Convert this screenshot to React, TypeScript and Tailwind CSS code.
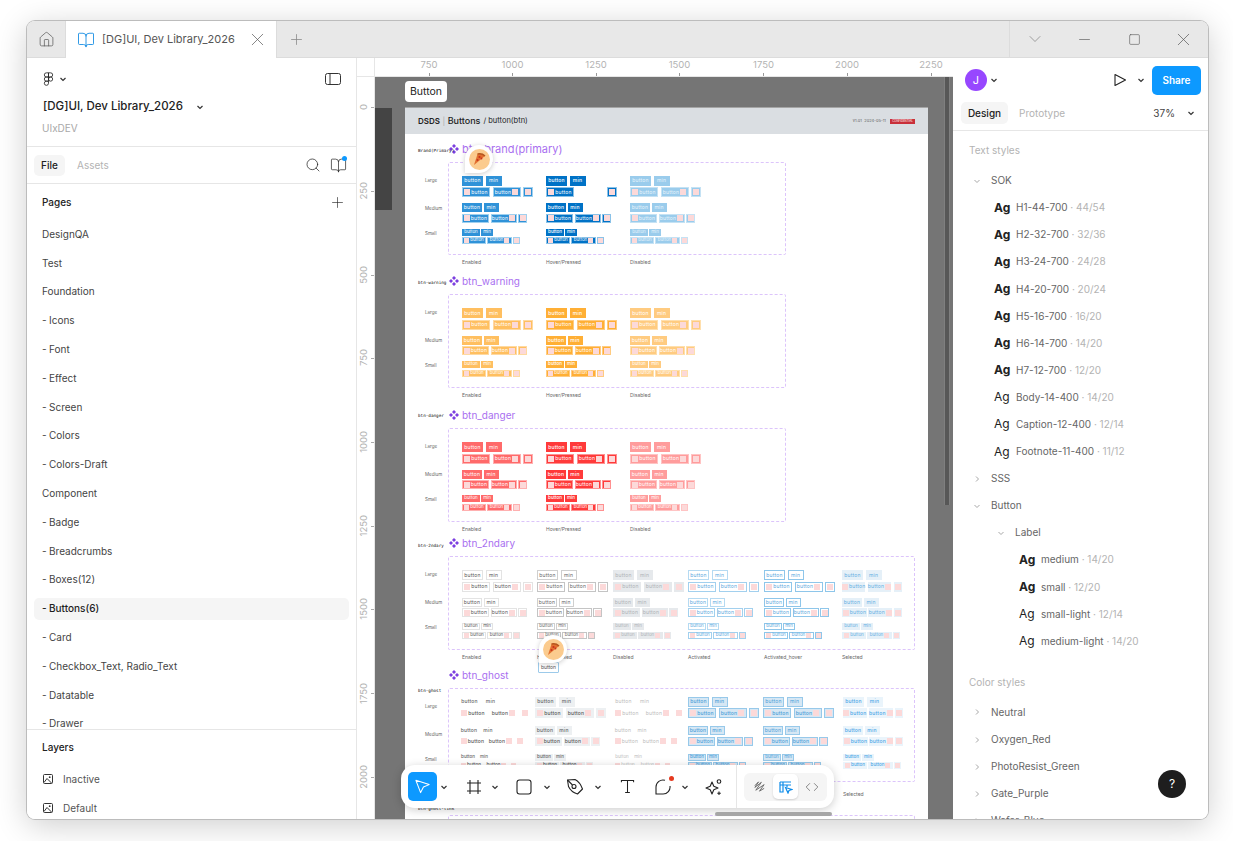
import React from "react";
import { BookOpen, ChevronDown, Code, Home, Minus, Plus, Search, Square, X } from "lucide-react";

const Chev = ({ cls = "" }: { cls?: string }) => (
  <svg viewBox="0 0 8 8" className={"w-2 h-2 shrink-0 " + cls} fill="none" stroke="#333" strokeWidth="1.2">
    <path d="M1.5 3 L4 5.5 L6.5 3" />
  </svg>
);
const SmallChev = ({ right = false }: { right?: boolean }) => (
  <svg viewBox="0 0 8 8" className="w-2 h-2 shrink-0" fill="none" stroke="#a8a8a8" strokeWidth="1">
    {right ? <path d="M3 1.5 L5.5 4 L3 6.5" /> : <path d="M1.5 3 L4 5.5 L6.5 3" />}
  </svg>
);

const FigmaLogo = () => (
  <svg viewBox="0 0 12 18" className="w-[11px] h-[15px]" fill="none" stroke="#222" strokeWidth="1">
    <path d="M6 1H3.5a2.5 2.5 0 0 0 0 5H6z" />
    <path d="M6 1h2.5a2.5 2.5 0 0 1 0 5H6z" />
    <path d="M6 6H3.5a2.5 2.5 0 0 0 0 5H6z" />
    <circle cx="8.5" cy="8.5" r="2.5" />
    <path d="M3.5 11H6v2.5A2.5 2.5 0 1 1 3.5 11z" />
  </svg>
);

const ImgIcon = () => (
  <svg viewBox="0 0 10 10" className="w-[10px] h-[10px] shrink-0" fill="none" stroke="#333" strokeWidth="1">
    <rect x="0.5" y="0.5" width="9" height="9" rx="1" />
    <circle cx="6.7" cy="3.2" r="0.9" fill="#333" stroke="none" />
    <path d="M1 8.5 L4 4.5 L8.5 9" />
  </svg>
);

const Pizza = ({ cls }: { cls: string }) => (
  <div className={"absolute w-[28px] h-[28px] rounded-full rounded-bl-none bg-white shadow-[0_1px_5px_rgba(0,0,0,0.2)] flex items-center justify-center " + cls}>
    <svg viewBox="0 0 21 21" className="w-[21px] h-[21px]">
      <circle cx="10.5" cy="10.5" r="10.5" fill="#fbcb8e" />
      <path d="M5 16 L8.5 5 Q13 4 16 7 Z" fill="#e2702f" />
      <path d="M8.5 5 Q13 4 16 7" fill="none" stroke="#b5561f" strokeWidth="1.5" />
      <circle cx="10.5" cy="8" r="1.1" fill="#c8301f" />
      <circle cx="12.5" cy="9.5" r="0.9" fill="#c8301f" />
      <circle cx="8.5" cy="11" r="1" fill="#c8301f" />
    </svg>
  </div>
);

const Diamonds = () => (
  <svg viewBox="0 0 10 10" className="w-[10px] h-[10px] shrink-0" fill="#7c3fe0">
    <path d="M5 0 L7 2 L5 4 L3 2 Z" />
    <path d="M2 3 L4 5 L2 7 L0 5 Z" />
    <path d="M8 3 L10 5 L8 7 L6 5 Z" />
    <path d="M5 6 L7 8 L5 10 L3 8 Z" />
  </svg>
);

type St = { r1: string; r2: string };

const Ico = ({ small }: { small?: boolean }) => (
  <span className={(small ? "w-[5px] h-[5px] " : "w-[6px] h-[6px] ") + "bg-[#fcd9d9] shrink-0"} />
);

const SIZES = [
  { h: "h-[10px]", r1h: "h-[10px]", a: "w-[21px]", b: "w-[16px]", c: "w-[28px]", d: "w-[28px]", e: "w-[10px]", t: "text-[5px] tracking-[0.2px]", g: "gap-[2.5px]", mb: "mb-[1.5px]", small: false },
  { h: "h-[9px]", r1h: "h-[9px]", a: "w-[20px]", b: "w-[15px]", c: "w-[27px]", d: "w-[26px]", e: "w-[9px]", t: "text-[5px] tracking-[0.2px]", g: "gap-[1.5px]", mb: "mb-[1.5px]", small: false },
  { h: "h-[7px]", r1h: "h-[7px]", a: "w-[18px]", b: "w-[12px]", c: "w-[24px]", d: "w-[25px]", e: "w-[7px]", t: "text-[4.5px]", g: "gap-[1px]", mb: "mb-[1.5px]", small: true },
];

const ButtonSet = ({ st, gapCls, skip }: { st: St; gapCls: string; skip?: boolean }) => (
  <div className={"flex flex-col " + gapCls}>
    {SIZES.map((s, i) => (
      <div key={i} className="flex flex-col">
        <div className={"flex " + s.g + " " + s.mb}>
          <span className={"flex items-center justify-center leading-none " + s.a + " " + s.r1h + " " + s.t + " " + st.r1}>button</span>
          <span className={"flex items-center justify-center leading-none " + s.b + " " + s.r1h + " " + s.t + " " + st.r1}>min</span>
        </div>
        <div className={"flex " + s.g}>
          <span className={"flex items-center justify-center gap-[1px] leading-none " + s.c + " " + s.h + " " + s.t + " " + st.r2}>
            <Ico small={s.small} />button
          </span>
          <span className={"flex items-center justify-center gap-[1px] leading-none " + s.d + " " + s.h + " " + s.t + " " + st.r2 + (skip && i === 0 ? " invisible" : "")}>
            button<Ico small={s.small} />
          </span>
          <span className={"flex items-center justify-center leading-none " + s.e + " " + s.h + " " + st.r2}>
            <Ico small={s.small} />
          </span>
        </div>
      </div>
    ))}
  </div>
);

const BRAND: St[] = [
  { r1: "bg-[#2f92d8] text-white", r2: "bg-[#2f92d8] text-white border border-[#9fd0ef]" },
  { r1: "bg-[#0072c6] text-white font-medium", r2: "bg-[#0072c6] text-white border border-[#8ac2e8]" },
  { r1: "bg-[#9accec] text-[#e8f4fb]", r2: "bg-[#9accec] text-[#e8f4fb] border border-[#c5e2f4]" },
];
const WARN: St[] = [
  { r1: "bg-[#ffbf60] text-white", r2: "bg-[#ffbf60] text-white border border-[#ffd9a0]" },
  { r1: "bg-[#ffaf35] text-white font-medium", r2: "bg-[#ffaf35] text-white border border-[#ffcb80]" },
  { r1: "bg-[#ffcb80] text-white", r2: "bg-[#ffcb80] text-white border border-[#ffdfad]" },
];
const DANGER: St[] = [
  { r1: "bg-[#ff6a6a] text-white", r2: "bg-[#ff6a6a] text-white border border-[#ffb0b0]" },
  { r1: "bg-[#ff3a3a] text-white font-medium", r2: "bg-[#ff3a3a] text-white border border-[#ff9090]" },
  { r1: "bg-[#ff9c9c] text-white", r2: "bg-[#ff9c9c] text-white border border-[#ffc4c4]" },
];
const SECOND: St[] = [
  { r1: "bg-white text-[#555] border border-[#e3e3e3]", r2: "bg-white text-[#555] border border-[#e3e3e3]" },
  { r1: "bg-white text-[#666] border border-[#cfcfcf]", r2: "bg-white text-[#666] border border-[#c4c4c4]" },
  { r1: "bg-[#e6e9ec] text-[#aeb2b6]", r2: "bg-[#e6e9ec] text-[#aeb2b6]" },
  { r1: "bg-white text-[#5aa7dd] border border-[#b5daf2]", r2: "bg-white text-[#5aa7dd] border border-[#a2d0ee]" },
  { r1: "bg-white text-[#5aa7dd] border border-[#8ec6ea]", r2: "bg-white text-[#5aa7dd] border border-[#8ec6ea]" },
  { r1: "bg-[#e5f0f8] text-[#64aee2]", r2: "bg-[#e5f0f8] text-[#64aee2]" },
];
const GHOST: St[] = [
  { r1: "text-[#666] font-medium", r2: "text-[#555] font-medium" },
  { r1: "bg-[#edf0f2] text-[#666] font-medium", r2: "bg-[#edf0f2] text-[#555] font-medium" },
  { r1: "text-[#bbb]", r2: "text-[#bbb]" },
  { r1: "bg-[#d6e7f4] text-[#4a9ed8] font-medium border border-[#97c9ea]", r2: "bg-[#d6e7f4] text-[#4a9ed8] font-medium border border-[#97c9ea]" },
  { r1: "bg-[#d6e7f4] text-[#4a9ed8] border border-[#97c9ea]", r2: "bg-[#d6e7f4] text-[#4a9ed8] font-medium border border-[#97c9ea]" },
  { r1: "bg-[#eaf4fb] text-[#4aa6e6] font-medium", r2: "bg-[#eaf4fb] text-[#4aa6e6] font-medium" },
];

const S3 = ["Enabled", "Hover/Pressed", "Disabled"];
const S6 = ["Enabled", "Hover/Pressed", "Disabled", "Activated", "Activated_hover", "Selected"];
const W3 = ["w-[84px]", "w-[84px]", "w-[84px]"];
const W6 = ["w-[75px]", "w-[76px]", "w-[75px]", "w-[76px]", "w-[78px]", "w-[60px]"];
const G6 = ["w-[76px]", "w-[78px]", "w-[75px]", "w-[75px]", "w-[80px]", "w-[60px]"];

type SecP = {
  name: string; title: string; titleCls?: string; h: string; nameTop: string; boxW: string; boxH: string; pad: string; widths: string[]; states: St[]; labels: string[];
  labelPad: string; labelMt: string; gap: string; skipHover?: boolean;
};

const Section = (p: SecP) => (
  <section className={"flex relative " + p.h}>
    <div className={"absolute left-0 font-['DejaVu_Sans_Mono',monospace] text-[4.3px] leading-[6px] text-[#111] whitespace-nowrap z-10 " + p.nameTop}>{p.name}</div>
    <div className="w-[30px] pt-[37px] pl-[7px] text-[4.5px] leading-[6px] text-[#666]">
      <div className="mb-[22px]">Large</div>
      <div className="mb-[19px]">Medium</div>
      <div>Small</div>
    </div>
    <div className="flex flex-col">
      <div className="flex items-center gap-[3px] h-[16px] mb-[5px] pl-px shrink-0">
        <Diamonds />
        <span className={"text-[#a970f0] leading-none " + (p.titleCls ?? "text-[10px]")}>{p.title}</span>
      </div>
      <div className={"flex border border-dashed border-[#dcc4fb] rounded-[2px] shrink-0 " + p.boxW + " " + p.boxH + " " + p.pad}>
        {p.states.map((st, i) => (
          <div key={i} className={"shrink-0 " + p.widths[i]}>
            <ButtonSet st={st} gapCls={p.gap} skip={p.skipHover && i === 1} />
          </div>
        ))}
      </div>
      <div className={"flex shrink-0 text-[5px] leading-[6px] text-[#666] " + p.labelPad + " " + p.labelMt}>
        {p.labels.map((l, i) => (
          <div key={l} className={"shrink-0 " + p.widths[i]}>{l}</div>
        ))}
      </div>
    </div>
  </section>
);

const Artboard = () => (
  <div className="absolute left-[30px] top-[31px] w-[523px] h-[720px] bg-white shadow-[0_-1px_0_#a5a5a5] overflow-hidden">
    <div className="h-[26px] bg-[#dadee2] flex items-center pl-[13px] pr-[13px] text-[#222]">
      <span className="text-[8px] font-semibold">DSDS</span>
      <span className="text-[8px] text-[#aaa] mx-[2.5px]">|</span>
      <span className="text-[9px] font-medium">Buttons</span>
      <span className="text-[7.5px] ml-[3px]">/ button(btn)</span>
      <span className="ml-auto text-[4px] text-[#666]">v1.01&nbsp;&nbsp;2024-05-11</span>
      <span className="ml-[4px] w-[25px] h-[5px] bg-[#c9303a] text-white text-[2.8px] leading-[5px] text-center whitespace-nowrap overflow-hidden">CONFIDENTIAL</span>
    </div>
    <div className="pl-[13px] pt-[7px]">
      <Section name="Brand(Primary)" title="btn_brand(primary)" titleCls="text-[11px]" h="h-[132px]" nameTop="top-[7px]" boxW="w-[338px]" boxH="h-[93px]" pad="pl-[13px] pt-[12.5px]" widths={W3} states={BRAND} labels={S3} labelPad="pl-[14px]" labelMt="mt-[4px]" gap="gap-[6px]" skipHover />
      <Section name="btn-warning" title="btn_warning" h="h-[134px]" nameTop="top-[7px]" boxW="w-[338px]" boxH="h-[94px]" pad="pl-[13px] pt-[13px]" widths={W3} states={WARN} labels={S3} labelPad="pl-[14px]" labelMt="mt-[4px]" gap="gap-[6px]" />
      <Section name="btn-danger" title="btn_danger" h="h-[128px]" nameTop="top-[6px]" boxW="w-[338px]" boxH="h-[94px]" pad="pl-[13px] pt-[13px]" widths={W3} states={DANGER} labels={S3} labelPad="pl-[14px]" labelMt="mt-[4px]" gap="gap-[6px]" />
      <Section name="btn-2ndary" title="btn_2ndary" h="h-[132px]" nameTop="top-[8px]" boxW="w-[467px]" boxH="h-[94px]" pad="pl-[13px] pt-[13px]" widths={W6} states={SECOND} labels={S6} labelPad="pl-[14px]" labelMt="mt-[4px]" gap="gap-[6px]" />
      <Section name="btn-ghost" title="btn_ghost" h="h-[127px]" nameTop="top-[21px]" boxW="w-[467px]" boxH="h-[94px]" pad="pl-[10px] pt-[7.5px]" widths={G6} states={GHOST} labels={S6} labelPad="pl-[11px]" labelMt="mt-[9px]" gap="gap-[8px]" />
      <section className="flex relative h-[60px]">
        <div className="absolute left-0 top-[12px] font-['DejaVu_Sans_Mono',monospace] text-[4.3px] leading-[6px] text-[#111]">btn-ghost-link</div>
        <div className="w-[30px]" />
        <div className="mt-[21px] w-[467px] h-[30px] border border-dashed border-[#dcc4fb] rounded-[2px]" />
      </section>
    </div>
  </div>
);

const Tool = ({ children, cls = "" }: { children: React.ReactNode; cls?: string }) => (
  <div className={"w-[28px] h-[28px] flex items-center justify-center shrink-0 " + cls}>{children}</div>
);
const TChev = ({ cls = "" }: { cls?: string }) => (
  <div className={"w-[14px] flex justify-center shrink-0 " + cls}><Chev /></div>
);

const Toolbar = () => (
  <div className="absolute left-[26px] top-[688px] w-[433px] h-[43px] bg-white rounded-[14px] shadow-[0_2px_10px_rgba(0,0,0,0.2)] flex items-center pl-[7px] text-[#222]">
    <div className="w-[29px] h-[29px] rounded-[5px] bg-[#0d99ff] flex items-center justify-center shrink-0">
      <svg viewBox="0 0 18 18" className="w-[17px] h-[17px]" fill="none" stroke="#fff" strokeWidth="1.1" strokeLinejoin="round">
        <path d="M2 2.5 L16 7 L10 9.5 L7 15.5 Z" />
      </svg>
    </div>
    <TChev />
    <Tool cls="ml-[9px]">
      <svg viewBox="0 0 16 16" className="w-[16px] h-[16px]" fill="none" stroke="#222" strokeWidth="1.1">
        <path d="M4 1v14M12 1v14M1 4h14M1 12h14" />
      </svg>
    </Tool>
    <TChev />
    <Tool cls="ml-[8px]">
      <svg viewBox="0 0 16 16" className="w-[16px] h-[16px]" fill="none" stroke="#222" strokeWidth="1.1">
        <rect x="1" y="1" width="14" height="14" rx="2.5" />
      </svg>
    </Tool>
    <TChev cls="ml-[2px]" />
    <Tool cls="ml-[7px]">
      <svg viewBox="0 0 18 18" className="w-[18px] h-[18px]" fill="none" stroke="#222" strokeWidth="1.1" strokeLinejoin="round">
        <path d="M1.5 2 L9 1.5 Q14 4 16.5 11 L11.5 16 Q5 14 2.5 8.5 Z" />
        <circle cx="8" cy="8.5" r="2" />
        <path d="M1.5 2 L6.5 7" />
      </svg>
    </Tool>
    <TChev cls="ml-[2px]" />
    <Tool cls="ml-[8px]">
      <svg viewBox="0 0 16 16" className="w-[15px] h-[15px]" fill="none" stroke="#222" strokeWidth="1.1">
        <path d="M1.5 3.5V1.5h13v2M8 1.5v13M5.5 14.5h5" />
      </svg>
    </Tool>
    <Tool cls="ml-[8px] relative">
      <svg viewBox="0 0 16 16" className="w-[16px] h-[16px]" fill="none" stroke="#222" strokeWidth="1.1">
        <path d="M10 1.3 A7 7 0 0 0 1 8 V15 H8 A7 7 0 0 0 15 7" />
      </svg>
      <span className="absolute right-[3px] top-[3px] w-[5px] h-[5px] rounded-full bg-[#e5391f]" />
    </Tool>
    <TChev cls="ml-px" />
    <Tool cls="ml-[8px]">
      <svg viewBox="0 0 18 18" className="w-[18px] h-[18px]" fill="none" stroke="#222" strokeWidth="1.1" strokeLinejoin="round">
        <path d="M7 4 L8.8 8.2 L13 10 L8.8 11.8 L7 16 L5.2 11.8 L1 10 L5.2 8.2 Z" />
        <circle cx="14" cy="3.5" r="1.8" />
        <path d="M14 13.5v3.5M12.3 15.2h3.5" />
      </svg>
    </Tool>
    <div className="w-px h-[43px] bg-[#e6e6e6] ml-[8px]" />
    <div className="ml-[7px] w-[83px] h-[28px] bg-[#f5f5f5] rounded-[6px] flex items-center justify-between px-[2px]">
      <div className="w-[26px] flex justify-center">
        <svg viewBox="0 0 14 14" className="w-[13px] h-[13px]" fill="none" stroke="#666" strokeWidth="1">
          <path d="M2 6 L6 2 L2 8 L9 2.5 L3 11 L12 5 L7 12 L12 9" />
        </svg>
      </div>
      <div className="w-[25px] h-[25px] bg-white rounded-[5px] shadow-[0_1px_2px_rgba(0,0,0,0.15)] flex items-center justify-center">
        <svg viewBox="0 0 14 14" className="w-[14px] h-[14px]" fill="none" stroke="#0d8ce9" strokeWidth="1.2">
          <path d="M1 2h11M1 5h11M1 2v10h3V2M8 5v2" />
          <path d="M6.5 7.5 L13 9.5 L10 10.5 L9 13 Z" fill="#fff" />
        </svg>
      </div>
      <div className="w-[26px] flex justify-center">
        <Code className="w-[14px] h-[14px] text-[#666]" strokeWidth={1.3} />
      </div>
    </div>
  </div>
);

const TOP = [
  { t: "750", x: 54 }, { t: "1000", x: 137.5 }, { t: "1250", x: 221 }, { t: "1500", x: 304.5 },
  { t: "1750", x: 388.5 }, { t: "2000", x: 472 }, { t: "2250", x: 556 },
];
const LEFT = [
  { t: "0", y: 30 }, { t: "250", y: 114 }, { t: "500", y: 198 }, { t: "750", y: 281 }, { t: "1000", y: 365 },
  { t: "1250", y: 449 }, { t: "1500", y: 532 }, { t: "1750", y: 616 }, { t: "2000", y: 700 },
];

const Center = () => (
  <div className="flex-1 flex flex-col min-w-0">
    <div className="h-[19px] flex border-b border-[#e6e6e6] shrink-0">
      <div className="w-[18px] border-r border-[#e6e6e6] shrink-0" />
      <div className="flex-1 relative overflow-hidden">
        {TOP.map((r) => (
          <div key={r.t} style={{ left: r.x }} className="absolute top-0 h-[18px] w-0 flex flex-col items-center">
            <span className="text-[9.5px] leading-[14px] text-[#b3b3b3]">{r.t}</span>
            <span className="w-px h-[3px] mt-px bg-[#999] shrink-0" />
          </div>
        ))}
      </div>
    </div>
    <div className="flex-1 flex min-h-0">
      <div className="w-[18px] relative border-r border-[#e6e6e6] shrink-0 overflow-hidden">
        {LEFT.map((r) => (
          <div key={r.t} style={{ top: r.y }} className="absolute left-0 right-0 h-0 flex items-center justify-end">
            <span className="[writing-mode:vertical-rl] rotate-180 text-[9.5px] leading-[10px] text-[#b3b3b3] mr-[2px]">{r.t}</span>
            <span className="w-[3px] h-px bg-[#aaa] shrink-0" />
          </div>
        ))}
      </div>
      <div className="flex-1 relative bg-[#757575] overflow-hidden">
        <div className="absolute left-0 top-[31px] w-[17px] h-[102px] bg-[#444444]" />
        <div className="absolute left-[569px] top-0 w-[6px] h-[428px] bg-[#575757] border-x border-[#7f7f7f]" />
        <Artboard />
        <div className="absolute left-[30px] top-[4px] w-[42px] h-[21px] bg-white rounded-[4px] flex items-center justify-center text-[10.5px] text-[#222]">Button</div>
        <Pizza cls="left-[90px] top-[68px]" />
        <div className="absolute left-[163px] top-[585px] w-[21px] h-[11px] bg-white border border-[#9ccaea] rounded-[1px] flex items-center justify-center text-[5px] text-[#555]">button</div>
        <Pizza cls="left-[164px] top-[558px]" />
        <Toolbar />
        <div className="absolute left-[340px] top-[735px] w-[117px] h-[4px] rounded-full bg-[#a6a6a6]" />
      </div>
    </div>
  </div>
);

const PAGES = ["DesignQA", "Test", "Foundation", "- Icons", "- Font", "- Effect", "- Screen", "- Colors", "- Colors-Draft", "Component", "- Badge", "- Breadcrumbs", "- Boxes(12)", "- Buttons(6)", "- Card", "- Checkbox_Text, Radio_Text", "- Datatable", "- Drawer"];

const PageRow = ({ label }: { label: string }) => {
  const dash = label.startsWith("- ");
  const text = dash ? label.slice(2) : label;
  const active = text === "Buttons(6)";
  return (
    <div className="h-[28.8px] flex items-center px-[7px] shrink-0">
      <div className={"w-full h-[22px] rounded-[5px] flex items-center pl-[8px] text-[10px] " + (active ? "bg-[#f5f5f5] text-[#1e1e1e] font-medium" : "text-[#444]")}>
        {dash && <span className="w-[7px] shrink-0">-</span>}
        <span>{text}</span>
      </div>
    </div>
  );
};

const LeftPanel = () => (
  <aside className="w-[330px] border-r border-[#e6e6e6] flex flex-col shrink-0 bg-white">
    <div className="h-[89px] border-b border-[#e6e6e6] pt-[13px] px-[16px] shrink-0">
      <div className="h-[16px] flex items-center">
        <FigmaLogo />
        <Chev cls="ml-[5px]" />
        <svg viewBox="0 0 16 12" className="ml-auto mr-[-1px] w-[16px] h-[12px]" fill="none" stroke="#333" strokeWidth="1">
          <rect x="0.5" y="0.5" width="15" height="11" rx="2" />
          <path d="M5 0.5v11" />
        </svg>
      </div>
      <div className="mt-[12px] h-[16px] flex items-center text-[11.5px] text-[#222] font-medium">
        <span>[DG]UI, Dev Library_2026</span>
        <Chev cls="ml-[13px]" />
      </div>
      <div className="mt-[6px] -ml-px text-[10px] leading-[14px] text-[#a8a8a8]">UIxDEV</div>
    </div>
    <div className="h-[37px] border-b border-[#e6e6e6] flex items-center px-[7px] shrink-0">
      <div className="w-[31px] h-[21px] rounded-[5px] bg-[#f5f5f5] flex items-center justify-center text-[10px] font-medium text-[#222]">File</div>
      <div className="ml-[12px] text-[10px] text-[#b3b3b3]">Assets</div>
      <Search className="ml-auto w-[16px] h-[16px] text-[#222]" strokeWidth={1.1} />
      <div className="relative ml-[8.5px] mr-[2.5px]">
        <BookOpen className="w-[17px] h-[17px] text-[#222]" strokeWidth={1} />
        <span className="absolute right-0 -top-px w-[5px] h-[5px] rounded-full bg-[#0d99ff]" />
      </div>
    </div>
    <div className="flex-1 min-h-0 flex flex-col overflow-hidden">
      <div className="h-[36px] flex items-center justify-between pl-[15px] pr-[10.5px] shrink-0">
        <span className="text-[10px] font-medium text-[#222]">Pages</span>
        <Plus className="w-[17px] h-[17px] text-[#222]" strokeWidth={0.9} />
      </div>
      <div className="flex-1 min-h-0 overflow-hidden flex flex-col">
        {PAGES.map((p) => <PageRow key={p} label={p} />)}
      </div>
    </div>
    <div className="h-[90px] border-t border-[#e6e6e6] shrink-0 overflow-hidden">
      <div className="h-[35px] flex items-center pl-[15px] text-[10px] font-medium text-[#222]">Layers</div>
      {["Inactive", "Default"].map((l) => (
        <div key={l} className="h-[28.8px] flex items-center gap-[10px] pl-[16px] text-[10px] text-[#555]">
          <ImgIcon />
          <span>{l}</span>
        </div>
      ))}
    </div>
  </aside>
);

const Ag = ({ bold }: { bold: boolean }) => (
  <span className={"text-[12px] text-[#222] leading-none w-[22px] shrink-0 " + (bold ? "font-bold" : "font-normal")}>Ag</span>
);

const StyleRow = ({ name, meta, bold, deep }: { name: string; meta: string; bold: boolean; deep?: boolean }) => (
  <div className={"h-[27.1px] flex items-center text-[10px] shrink-0 " + (deep ? "pl-[66px]" : "pl-[41px]")}>
    <Ag bold={bold} />
    <span className="text-[#666]">{name}</span>
    <span className="text-[#b3b3b3]">&nbsp;· {meta}</span>
  </div>
);

const TreeRow = ({ name, open, pl = "pl-[20px]" }: { name: string; open?: boolean; pl?: string }) => (
  <div className={"h-[27.1px] flex items-center gap-[10px] text-[10px] text-[#666] shrink-0 " + pl}>
    <SmallChev right={!open} />
    <span>{name}</span>
  </div>
);

const RightPanel = () => (
  <aside className="w-[255px] bg-white flex flex-col shrink-0 relative overflow-hidden">
    <div className="h-[73px] border-b border-[#e6e6e6] shrink-0 flex flex-col">
      <div className="h-[43px] flex items-center pl-[12px] pr-[7px] pt-[1px] shrink-0">
        <div className="w-[22px] h-[22px] rounded-full bg-[#9747ff] text-white text-[11px] flex items-center justify-center">J</div>
        <Chev cls="ml-[3px]" />
        <svg viewBox="0 0 14 14" className="ml-auto w-[14px] h-[14px]" fill="none" stroke="#222" strokeWidth="1.1" strokeLinejoin="round">
          <path d="M2 1.5 L12.5 7 L2 12.5 Z" />
        </svg>
        <Chev cls="ml-[10px]" />
        <div className="ml-[7px] w-[49px] h-[29px] bg-[#0d99ff] rounded-[5px] text-white text-[10px] font-semibold flex items-center justify-center">Share</div>
      </div>
      <div className="h-[22px] flex items-center pl-[8px] pr-[13px] mt-[1px]">
        <div className="w-[47px] h-[22px] rounded-[5px] bg-[#f5f5f5] flex items-center justify-center text-[10px] font-medium text-[#222]">Design</div>
        <span className="ml-[11px] text-[10px] text-[#b3b3b3]">Prototype</span>
        <span className="ml-auto text-[10px] text-[#444]">37%</span>
        <Chev cls="ml-[12px]" />
      </div>
    </div>
    <div className="flex-1 flex flex-col overflow-hidden pt-[6px]">
      <div className="h-[27.1px] flex items-center pl-[16px] text-[10px] text-[#b3b3b3] shrink-0 mb-[3px]">Text styles</div>
      <TreeRow name="SOK" open />
      <StyleRow name="H1-44-700" meta="44/54" bold />
      <StyleRow name="H2-32-700" meta="32/36" bold />
      <StyleRow name="H3-24-700" meta="24/28" bold />
      <StyleRow name="H4-20-700" meta="20/24" bold />
      <StyleRow name="H5-16-700" meta="16/20" bold />
      <StyleRow name="H6-14-700" meta="14/20" bold />
      <StyleRow name="H7-12-700" meta="12/20" bold />
      <StyleRow name="Body-14-400" meta="14/20" bold={false} />
      <StyleRow name="Caption-12-400" meta="12/14" bold={false} />
      <StyleRow name="Footnote-11-400" meta="11/12" bold={false} />
      <TreeRow name="SSS" />
      <TreeRow name="Button" open />
      <TreeRow name="Label" open pl="pl-[44px]" />
      <StyleRow name="medium" meta="14/20" bold deep />
      <StyleRow name="small" meta="12/20" bold deep />
      <StyleRow name="small-light" meta="12/14" bold={false} deep />
      <StyleRow name="medium-light" meta="14/20" bold={false} deep />
      <div className="h-[27.1px] flex items-center pl-[16px] text-[10px] text-[#b3b3b3] shrink-0 mt-[14px] mb-[3px]">Color styles</div>
      <TreeRow name="Neutral" />
      <TreeRow name="Oxygen_Red" />
      <TreeRow name="PhotoResist_Green" />
      <TreeRow name="Gate_Purple" />
      <TreeRow name="Wafer_Blue" />
    </div>
    <div className="absolute right-[22px] bottom-[21px] w-[28px] h-[28px] rounded-full bg-[#1e1e1e] text-white text-[12px] flex items-center justify-center">?</div>
  </aside>
);

const TitleBar = () => (
  <div className="h-[37px] bg-[#e8e8e8] border-b border-[#dcdcdc] flex shrink-0 text-[#555]">
    <div className="w-[39px] flex items-center justify-center border-r border-[#dcdcdc]">
      <Home className="w-[17px] h-[17px]" strokeWidth={1} />
    </div>
    <div className="w-[211px] bg-white flex items-center pl-[10.5px] pr-[8.5px] -mb-px border-r border-[#dcdcdc]">
      <BookOpen className="w-[18px] h-[18px] text-[#1a8fe3]" strokeWidth={1.2} />
      <span className="ml-[7.5px] text-[11px] text-[#555] whitespace-nowrap">[DG]UI, Dev Library_2026</span>
      <X className="ml-auto w-[21px] h-[21px]" strokeWidth={0.8} />
    </div>
    <div className="ml-[11px] flex items-center">
      <Plus className="w-[17px] h-[17px] text-[#888]" strokeWidth={1.1} />
    </div>
    <div className="ml-auto w-[199px] border-l border-[#dcdcdc] flex items-center">
      <div className="w-[50px] flex justify-center"><ChevronDown className="w-[20px] h-[20px] text-[#777]" strokeWidth={0.8} /></div>
      <div className="w-[50px] flex justify-center"><Minus className="w-[17px] h-[17px]" strokeWidth={0.9} /></div>
      <div className="w-[50px] flex justify-center">
        <Square className="w-[13px] h-[13px]" strokeWidth={1.1} />
      </div>
      <div className="w-[49px] flex justify-center"><X className="w-[21px] h-[21px]" strokeWidth={0.8} /></div>
    </div>
  </div>
);

export default function App() {
  return (
    <div className="w-[1233px] h-[841px] overflow-hidden bg-white pt-[21px] pl-[27px] font-['Inter','Noto_Sans',sans-serif]">
      <div className="w-[1181px] h-[798px] rounded-[8px] overflow-hidden bg-white flex flex-col shadow-[0_0_0_1px_#bcbcbc,0_6px_32px_rgba(0,0,0,0.2)]">
        <TitleBar />
        <div className="flex-1 flex min-h-0">
          <LeftPanel />
          <Center />
          <RightPanel />
        </div>
      </div>
    </div>
  );
}
